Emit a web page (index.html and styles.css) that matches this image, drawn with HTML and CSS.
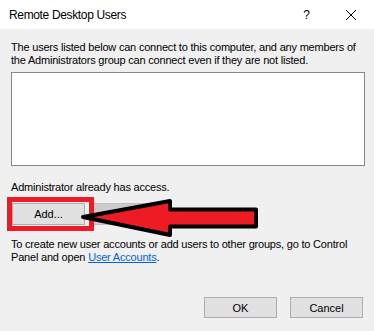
FILE: index.html
```html
<!DOCTYPE html>
<html>
<head>
    <title>Remote Desktop Users</title>
    <link rel="stylesheet" href="styles.css">
</head>
<body>
    <div class="dialog">
        <div class="titlebar">
            <span class="title">Remote Desktop Users</span>
            <span class="help">?</span>
            <svg class="close" width="12" height="12" viewBox="0 0 12 12">
                <path d="M1 1 L11 11 M11 1 L1 11" stroke="#000" stroke-width="1" fill="none"/>
            </svg>
        </div>

        <div class="content">
            <p class="intro">The users listed below can connect to this computer, and any members of the Administrators group can connect even if they are not listed.</p>

            <div class="listbox"></div>

            <p class="access">Administrator already has access.</p>

            <div class="row">
                <button class="btn add">Add...</button>
                <button class="btn remove" disabled>Remove</button>
            </div>

            <p class="hint">To create new user accounts or add users to other groups, go to Control Panel and open <a href="#">User Accounts</a>.</p>

            <div class="footer">
                <button class="btn">OK</button>
                <button class="btn">Cancel</button>
            </div>
        </div>

        <!-- annotation drawn over the dialog -->
        <div class="highlight"></div>
        <svg class="arrow" width="190" height="48" viewBox="75 194 190 48">
            <polygon points="83,217 170,201 170,209.5 256,209.5 256,226.5 170,226.5 170,235"
                     fill="#ed1c24" stroke="#000" stroke-width="4" stroke-linejoin="round"/>
        </svg>
    </div>
</body>
</html>
```

FILE: styles.css
```css
body {
    margin: 0;
    background: #f0f0f0;
    font-family: "Liberation Sans", Arial, sans-serif;
    font-size: 11px;
    color: #000;
}
.dialog {
    position: relative;
    width: 374px;
    height: 331px;
    background: #f0f0f0;
    overflow: hidden;
}
.titlebar {
    height: 29px;
    background: #fff;
    display: flex;
    align-items: center;
    padding-left: 9px;
    font-size: 12px;
}
.title {
    flex: 1;
    letter-spacing: -0.35px;
}
.help {
    font-size: 12px;
    margin-right: 35px;
}
.close {
    margin-right: 17px;
}
.content {
    padding: 12px 9px 0 11px;
}
p {
    margin: 0;
    line-height: 13px;
    letter-spacing: -0.2px;
}
.listbox {
    margin-top: 5px;
    height: 92px;
    background: #fff;
    border: 1px solid #828790;
}
.access {
    margin-top: 15px;
}
.row {
    display: flex;
    gap: 8px;
    margin-top: 9px;
    margin-left: 1px;
}
.btn {
    width: 73px;
    height: 22px;
    padding: 0;
    background: #e1e1e1;
    border: 1px solid #adadad;
    font-family: "Liberation Sans", Arial, sans-serif;
    font-size: 11px;
    color: #000;
}
.remove {
    width: 75px;
    background: #cccccc;
    border-color: #bfbfbf;
    color: #838383;
}
.hint {
    margin-top: 13px;
}
.hint a {
    color: #0066cc;
}
.footer {
    display: flex;
    justify-content: flex-end;
    gap: 13px;
    margin-top: 33px;
    margin-right: 2px;
}
.footer .btn {
    height: 21px;
}
.highlight {
    position: absolute;
    left: 7px;
    top: 197px;
    width: 77px;
    height: 24px;
    border: 5px solid #ed1c24;
}
.arrow {
    position: absolute;
    left: 75px;
    top: 194px;
}
```
